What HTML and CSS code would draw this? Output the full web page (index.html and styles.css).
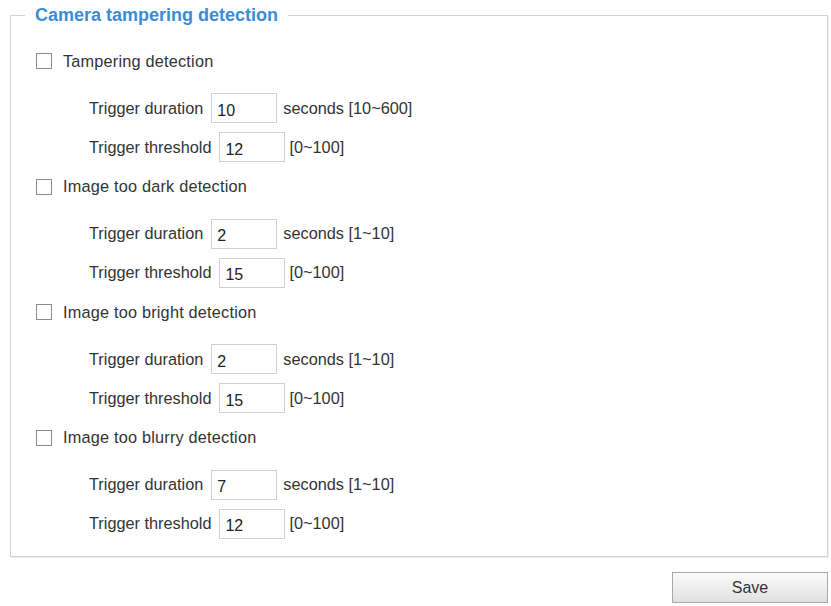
FILE: index.html
```html
<!DOCTYPE html>
<html>
<head>
<meta charset="utf-8">
<title>Camera tampering detection</title>
<link rel="stylesheet" href="styles.css">
</head>
<body>
<div class="page">
  <fieldset class="panel">
    <legend class="panel-title">Camera tampering detection</legend>

    <div class="group">
      <label class="check-row"><input type="checkbox" class="check"><span>Tampering detection</span></label>
      <div class="sub-row sub-row-first"><span class="lbl">Trigger duration</span><input class="field" type="text" value="10"><span class="hint">seconds [10~600]</span></div>
      <div class="sub-row sub-row-second"><span class="lbl">Trigger threshold</span><input class="field" type="text" value="12"><span class="hint hint-tight">[0~100]</span></div>
    </div>

    <div class="group">
      <label class="check-row"><input type="checkbox" class="check"><span>Image too dark detection</span></label>
      <div class="sub-row sub-row-first"><span class="lbl">Trigger duration</span><input class="field" type="text" value="2"><span class="hint">seconds [1~10]</span></div>
      <div class="sub-row sub-row-second"><span class="lbl">Trigger threshold</span><input class="field" type="text" value="15"><span class="hint hint-tight">[0~100]</span></div>
    </div>

    <div class="group">
      <label class="check-row"><input type="checkbox" class="check"><span>Image too bright detection</span></label>
      <div class="sub-row sub-row-first"><span class="lbl">Trigger duration</span><input class="field" type="text" value="2"><span class="hint">seconds [1~10]</span></div>
      <div class="sub-row sub-row-second"><span class="lbl">Trigger threshold</span><input class="field" type="text" value="15"><span class="hint hint-tight">[0~100]</span></div>
    </div>

    <div class="group">
      <label class="check-row"><input type="checkbox" class="check"><span>Image too blurry detection</span></label>
      <div class="sub-row sub-row-first"><span class="lbl">Trigger duration</span><input class="field" type="text" value="7"><span class="hint">seconds [1~10]</span></div>
      <div class="sub-row sub-row-second"><span class="lbl">Trigger threshold</span><input class="field" type="text" value="12"><span class="hint hint-tight">[0~100]</span></div>
    </div>
  </fieldset>

  <div class="actions">
    <button class="save-btn" type="button">Save</button>
  </div>
</div>
</body>
</html>
```

FILE: styles.css
```css
html, body {
  margin: 0;
  padding: 0;
  background: #ffffff;
}

body {
  font-family: "Liberation Sans", Arial, sans-serif;
  font-size: 16.3px;
  color: #333333;
}

.page {
  width: 831px;
  height: 606px;
  padding: 5px 3px 0 10px;
  box-sizing: border-box;
}

.panel {
  margin: 0;
  padding: 24px 14px 19px 14px;
  border: 1px solid #d3d3d3;
  box-shadow: 1px 1px 0 #ececec;
  height: 552px;
  box-sizing: border-box;
  min-width: 0;
}

.panel-title {
  padding: 0 10px;
  font-size: 18px;
  line-height: 20px;
  font-weight: bold;
  color: #3a8cd6;
}

.group {
  display: flex;
  flex-direction: column;
}

.group + .group {
  margin-top: 12.5px;
}

.check-row {
  display: flex;
  align-items: center;
  height: 24px;
  padding-left: 11px;
}

.check-row span {
  letter-spacing: 0.2px;
}

.check {
  appearance: none;
  -webkit-appearance: none;
  width: 16px;
  height: 16px;
  margin: 0 11px 0 0;
  border: 1px solid #8a8a8a;
  background: #ffffff;
  box-sizing: border-box;
}

.sub-row {
  display: flex;
  align-items: center;
  height: 30px;
  padding-left: 64px;
}

.sub-row-first {
  margin-top: 20px;
}

.sub-row-second {
  margin-top: 9px;
}

.lbl {
  white-space: nowrap;
}

.field {
  width: 66px;
  height: 30px;
  box-sizing: border-box;
  margin: 0 6px 0 8px;
  padding: 5px 5px 0 5px;
  border: 1px solid #d0d0d0;
  font-family: "Liberation Sans", Arial, sans-serif;
  font-size: 16px;
  color: #222222;
  background: #ffffff;
  outline: none;
}

.hint {
  white-space: nowrap;
}

.hint-tight {
  margin-left: -2px;
}

.actions {
  display: flex;
  justify-content: flex-end;
  margin-top: 15px;
}

.save-btn {
  width: 156px;
  height: 31px;
  border: 1px solid #a8a8a8;
  background: linear-gradient(#fbfbfb, #e1e1e1);
  font-family: "Liberation Sans", Arial, sans-serif;
  font-size: 16px;
  color: #333333;
  padding: 0;
}
```
